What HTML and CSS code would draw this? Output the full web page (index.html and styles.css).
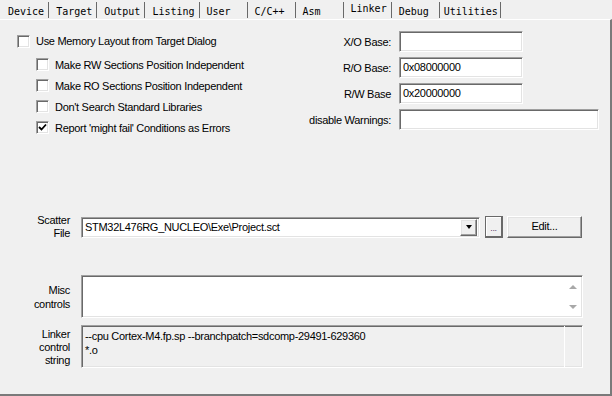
FILE: index.html
```html
<!DOCTYPE html>
<html lang="en">
<head>
    <meta charset="UTF-8">
    <title>Linker</title>
    <link rel="stylesheet" href="styles.css">
</head>
<body>
<div class="tabs">
    <div class="tab">Device</div>
    <div class="tab">Target</div>
    <div class="tab">Output</div>
    <div class="tab">Listing</div>
    <div class="tab">User</div>
    <div class="tab">C/C++</div>
    <div class="tab">Asm</div>
    <div class="tab active">Linker</div>
    <div class="tab">Debug</div>
    <div class="tab last">Utilities</div>
</div>
<div class="panel">
    <div class="top">
        <div class="opts">
            <label class="chk main"><span class="box"></span>Use Memory Layout from Target Dialog</label>
            <div class="sub">
                <label class="chk"><span class="box"></span>Make RW Sections Position Independent</label>
                <label class="chk"><span class="box"></span>Make RO Sections Position Independent</label>
                <label class="chk"><span class="box"></span>Don't Search Standard Libraries</label>
                <label class="chk"><span class="box"><svg width="9" height="9" viewBox="0 0 9 9"><path d="M1 4 L3.5 6.5 L8 1.5" fill="none" stroke="#000" stroke-width="1.8"/></svg></span>Report 'might fail' Conditions as Errors</label>
            </div>
        </div>
        <div class="bases">
            <span class="lbl">X/O Base:</span><div class="field sunken"></div>
            <span class="lbl">R/O Base:</span><div class="field sunken">0x08000000</div>
            <span class="lbl">R/W Base</span><div class="field sunken">0x20000000</div>
            <span class="lbl">disable Warnings:</span><div class="field wide sunken"></div>
        </div>
    </div>

    <div class="row scatter">
        <div class="side">Scatter<br>File</div>
        <div class="combo sunken">
            <span class="combo-text">STM32L476RG_NUCLEO\Exe\Project.sct</span>
            <span class="drop raised"><i class="arrow"></i></span>
        </div>
        <div class="btn dots">...</div>
        <div class="btn edit raised">Edit...</div>
    </div>

    <div class="row misc">
        <div class="side">Misc<br>controls</div>
        <div class="area sunken">
            <div class="area-text"></div>
            <div class="vscroll">
                <i class="up"></i>
                <i class="down"></i>
            </div>
        </div>
    </div>

    <div class="row linker">
        <div class="side">Linker<br>control<br>string</div>
        <div class="area readonly sunken">
            <div class="area-text">--cpu Cortex-M4.fp.sp --branchpatch=sdcomp-29491-629360<br>*.o</div>
            <div class="vscroll blank"></div>
        </div>
    </div>
</div>
</body>
</html>
```

FILE: styles.css
```css
*{
    margin: 0;
    padding: 0;
    box-sizing: border-box;
}
body{
    width: 612px;
    height: 396px;
    overflow: hidden;
    background: #f0f0f0;
    color: #000;
    font: 11px "Liberation Sans", Arial, sans-serif;
    letter-spacing: -0.3px;
}

/* tab strip */
.tabs{
    display: flex;
    height: 19px;
    padding-left: 2px;
    font: 10px "DejaVu Sans Mono", monospace;
    letter-spacing: 0;
}
.tab{
    min-width: 47px;
    height: 16px;
    margin-top: 2px;
    margin-right: 1px;
    padding: 4px 4px 0 6px;
    line-height: 12px;
    border-right: 1px solid #696969;
    white-space: nowrap;
}
.tab.active{
    padding-top: 1px;
}
.tab.last{
    padding-left: 3px;
    padding-right: 2px;
}

/* panel */
.panel{
    height: 377px;
    border-top: 1px solid #fff;
    border-right: 2px solid #7a7a7a;
    border-bottom: 2px solid #7a7a7a;
}
.sunken{
    border: 1px solid;
    border-color: #a0a0a0 #fff #fff #a0a0a0;
    box-shadow: inset 1px 1px #696969, inset -1px -1px #e3e3e3;
}
.raised{
    border: 1px solid;
    border-color: #fff #696969 #696969 #fff;
    box-shadow: inset -1px -1px #a0a0a0, inset 1px 1px #e3e3e3;
}

.top{
    display: flex;
    height: 118px;
}
.opts{
    width: 300px;
    padding: 13px 0 0 17px;
}
.chk{
    display: flex;
    align-items: center;
    gap: 6px;
    height: 21px;
    white-space: nowrap;
}
.chk.main{
    height: 16px;
}
.sub{
    margin-top: 5px;
    padding-left: 19px;
}
.box{
    display: flex;
    align-items: center;
    justify-content: center;
    width: 13px;
    height: 13px;
    flex: none;
    background: #fff;
    border: 1px solid;
    border-color: #a0a0a0 #fff #fff #a0a0a0;
    box-shadow: inset 1px 1px #696969, inset -1px -1px #e3e3e3;
}

.bases{
    display: grid;
    grid-template-columns: 91px 200px;
    column-gap: 8px;
    row-gap: 5px;
    align-content: start;
    padding-top: 11px;
}
.lbl{
    align-self: center;
    text-align: right;
    white-space: nowrap;
}
.field{
    width: 124px;
    height: 21px;
    padding: 3px 3px 0;
    line-height: 13px;
    background: #fff;
}
.field.wide{
    width: 200px;
}

/* lower rows */
.row{
    display: flex;
    align-items: center;
}
.side{
    width: 70px;
    margin-right: 11px;
    text-align: right;
    line-height: 13px;
}
.scatter{
    margin-top: 78px;
    height: 22px;
}
.combo{
    display: flex;
    align-items: center;
    justify-content: space-between;
    width: 399px;
    height: 21px;
    padding: 0 2px 0 3px;
    background: #fff;
}
.drop{
    display: flex;
    align-items: center;
    justify-content: center;
    width: 17px;
    height: 17px;
    background: #f0f0f0;
}
.arrow{
    border-left: 3px solid transparent;
    border-right: 3px solid transparent;
    border-top: 4px solid #000;
}
.btn{
    height: 22px;
    line-height: 19px;
    text-align: center;
}
.dots{
    width: 18px;
    margin-left: 5px;
    color: #5a3c6e;
    font-size: 9px;
    line-height: 22px;
    border: 1px solid #696969;
    border-right-width: 2px;
    border-bottom-width: 2px;
    box-shadow: inset 1px 1px #fff;
}
.edit{
    width: 75px;
    margin-left: 4px;
}

.misc{
    margin-top: 37px;
}
.misc .side{
    line-height: 14px;
}
.area{
    display: flex;
    width: 502px;
    height: 43px;
    background: #fff;
}
.area-text{
    flex: 1;
    padding: 3px 3px;
    line-height: 14px;
    white-space: nowrap;
}
.vscroll{
    display: flex;
    flex-direction: column;
    justify-content: space-between;
    align-items: center;
    width: 18px;
    padding: 9px 0 8px;
}
.up{
    border-left: 4px solid transparent;
    border-right: 4px solid transparent;
    border-bottom: 4px solid #a8a8a8;
}
.down{
    border-left: 4px solid transparent;
    border-right: 4px solid transparent;
    border-top: 4px solid #a8a8a8;
}
.linker{
    margin-top: 7px;
    align-items: flex-start;
}
.linker .side{
    padding-top: 3px;
}
.readonly{
    background: #f0f0f0;
}
.vscroll.blank{
    border-left: 1px solid #fff;
}
```
